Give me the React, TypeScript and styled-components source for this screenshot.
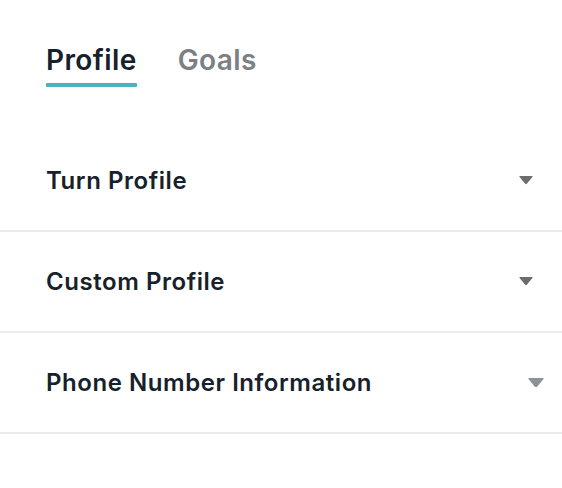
import styled, { createGlobalStyle } from 'styled-components';

const GlobalStyle = createGlobalStyle`
	body {
		margin: 0;
		background: #ffffff;
		font-family: Inter, 'Noto Sans', sans-serif;
		color: #17212b;
	}
`;

const Page = styled.div`
	width: 562px;
	padding-top: 42px;
`;

const Tabs = styled.div`
	display: flex;
	gap: 41px;
	padding-left: 46px;
	height: 89px;
`;

const Tab = styled.div<{ $active?: boolean }>`
	display: flex;
	flex-direction: column;
	align-items: flex-start;
	font-size: 28px;
	font-weight: 600;
	line-height: 36px;
	letter-spacing: 0.4px;
	color: ${(p) => (p.$active ? '#17212b' : '#7b8084')};
	&::after {
		content: '';
		display: ${(p) => (p.$active ? 'block' : 'none')};
		width: 100%;
		height: 4px;
		margin-top: 5px;
		background: #4bb1bb;
		border-radius: 1px;
	}
`;

const Row = styled.div<{ $pad: number }>`
	display: flex;
	align-items: center;
	justify-content: space-between;
	height: 99px;
	padding: 0 ${(p) => p.$pad}px 0 46px;
	border-bottom: 2px solid #ebebeb;
	font-size: 24px;
	font-weight: 600;
	letter-spacing: 0.55px;
	color: #17212b;
`;

const Caret = styled.svg``;

const rows = [
	{ title: 'Turn Profile', pad: 29, w: 14, color: '#6a6c6e' },
	{ title: 'Custom Profile', pad: 29, w: 14, color: '#6a6c6e' },
	{ title: 'Phone Number Information', pad: 18, w: 16, color: '#8c9296' },
];

const App = () => {
	return (
		<Page>
			<GlobalStyle />
			<Tabs>
				<Tab $active>Profile</Tab>
				<Tab>Goals</Tab>
			</Tabs>
			{rows.map((r) => (
				<Row key={r.title} $pad={r.pad}>
					<span>{r.title}</span>
					<Caret width={r.w} height={r.w * 0.6} viewBox="0 0 10 6">
						<path d="M0.3 0.6 Q0 0 0.8 0 H9.2 Q10 0 9.7 0.6 L5.6 5.6 Q5 6.2 4.4 5.6 Z" fill={r.color} />
					</Caret>
				</Row>
			))}
		</Page>
	);
};

export default App;
